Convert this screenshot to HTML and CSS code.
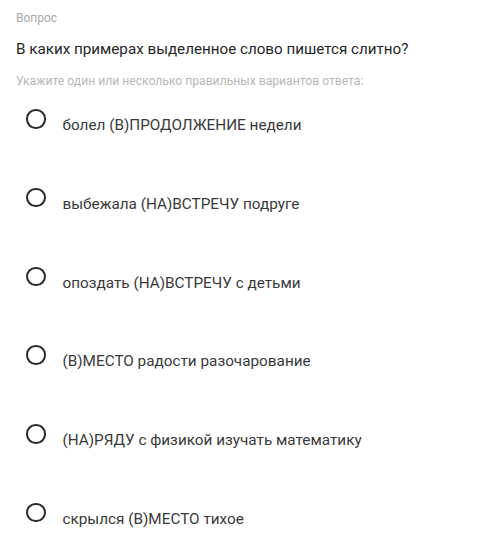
FILE: index.html
```html
<!DOCTYPE html>
<html lang="ru">
<head>
<meta charset="utf-8">
<link rel="stylesheet" href="styles.css">
</head>
<body>
<div class="quiz">
  <div class="label">Вопрос</div>
  <div class="question">В каких примерах выделенное слово пишется слитно?</div>
  <div class="hint">Укажите один или несколько правильных вариантов ответа:</div>
  <ul class="options">
    <li class="option"><span class="radio"></span><span class="text">болел (В)ПРОДОЛЖЕНИЕ недели</span></li>
    <li class="option"><span class="radio"></span><span class="text">выбежала (НА)ВСТРЕЧУ подруге</span></li>
    <li class="option"><span class="radio"></span><span class="text">опоздать (НА)ВСТРЕЧУ с детьми</span></li>
    <li class="option"><span class="radio"></span><span class="text">(В)МЕСТО радости разочарование</span></li>
    <li class="option"><span class="radio"></span><span class="text">(НА)РЯДУ с физикой изучать математику</span></li>
    <li class="option"><span class="radio"></span><span class="text">скрылся (В)МЕСТО тихое</span></li>
  </ul>
</div>
</body>
</html>
```
FILE: styles.css
```css
html, body {
  margin: 0;
  padding: 0;
  background: #fff;
}
body {
  font-family: Roboto, "Noto Sans", sans-serif;
  color: #222;
}
.quiz {
  padding: 10px 16px 0 16px;
}
.label {
  font-size: 12px;
  line-height: 16px;
  color: #a8a8a8;
}
.question {
  margin-top: 13px;
  font-size: 15.2px;
  line-height: 20px;
  color: #262626;
}
.hint {
  margin-top: 14px;
  font-size: 12.15px;
  line-height: 16px;
  color: #b8b8b8;
}
.options {
  list-style: none;
  margin: 20px 0 0 0;
  padding: 0 0 0 10px;
}
.option {
  display: flex;
  align-items: flex-start;
  height: 78.8px;
}
.radio {
  flex: none;
  width: 15.5px;
  height: 15.5px;
  border: 2.5px solid #2a2a2a;
  border-radius: 50%;
}
.text {
  margin-left: 17px;
  margin-top: 6px;
  font-size: 15.3px;
  line-height: 20px;
  color: #3a3a3a;
}
```
